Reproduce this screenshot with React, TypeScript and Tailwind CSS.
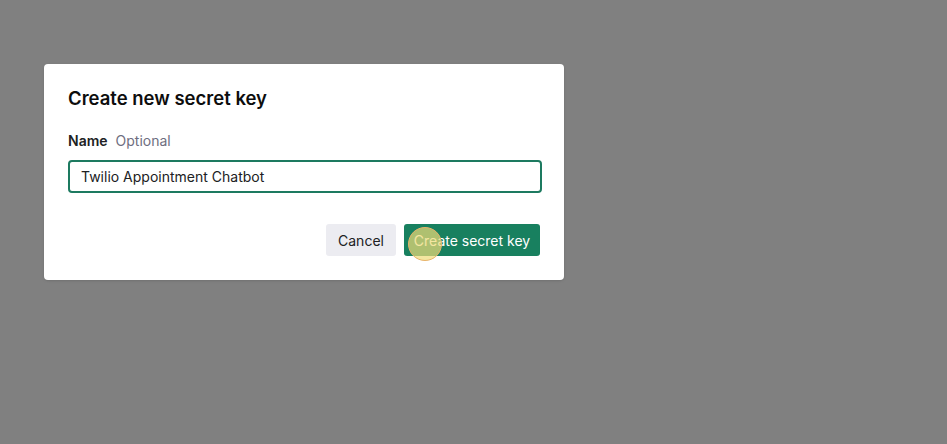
import React from "react"

export default function App() {
  return (
    <div className="relative h-[444px] w-[947px] overflow-hidden bg-[#808080] pt-[64px] pl-[44px] font-['Inter','Liberation_Sans',sans-serif]">
      <div className="w-[520px] rounded-[4px] bg-white px-6 pt-[22px] pb-[24px] shadow-sm">
        <h2 className="text-[18.5px] font-semibold leading-[24px] text-[#0d0d0d]">Create new secret key</h2>
        <div className="mt-[22px] flex items-baseline gap-2 text-[14px] leading-[18px]">
          <span className="font-semibold text-[#202123]">Name</span>
          <span className="text-[#6e6e80]">Optional</span>
        </div>
        <div className="mt-[10px] h-[33px] w-[474px] rounded-[4px] border-2 border-[#1d7a60] px-[11px] flex items-center text-[14px] text-[#202123]">
          Twilio Appointment Chatbot
        </div>
        <div className="mt-[31px] flex justify-end gap-2">
          <button className="h-[32px] w-[70px] rounded-[3px] bg-[#ececf1] text-[14px] text-[#202123]">Cancel</button>
          <button className="relative h-[32px] w-[136px] rounded-[3px] bg-[#18805f] text-[14px] text-white">
            Create secret key
            <span className="absolute left-[4px] top-[3px] h-[34px] w-[34px] rounded-full border border-[#e8b36a] bg-[rgba(240,220,120,0.7)]" />
          </button>
        </div>
      </div>
    </div>
  )
}
